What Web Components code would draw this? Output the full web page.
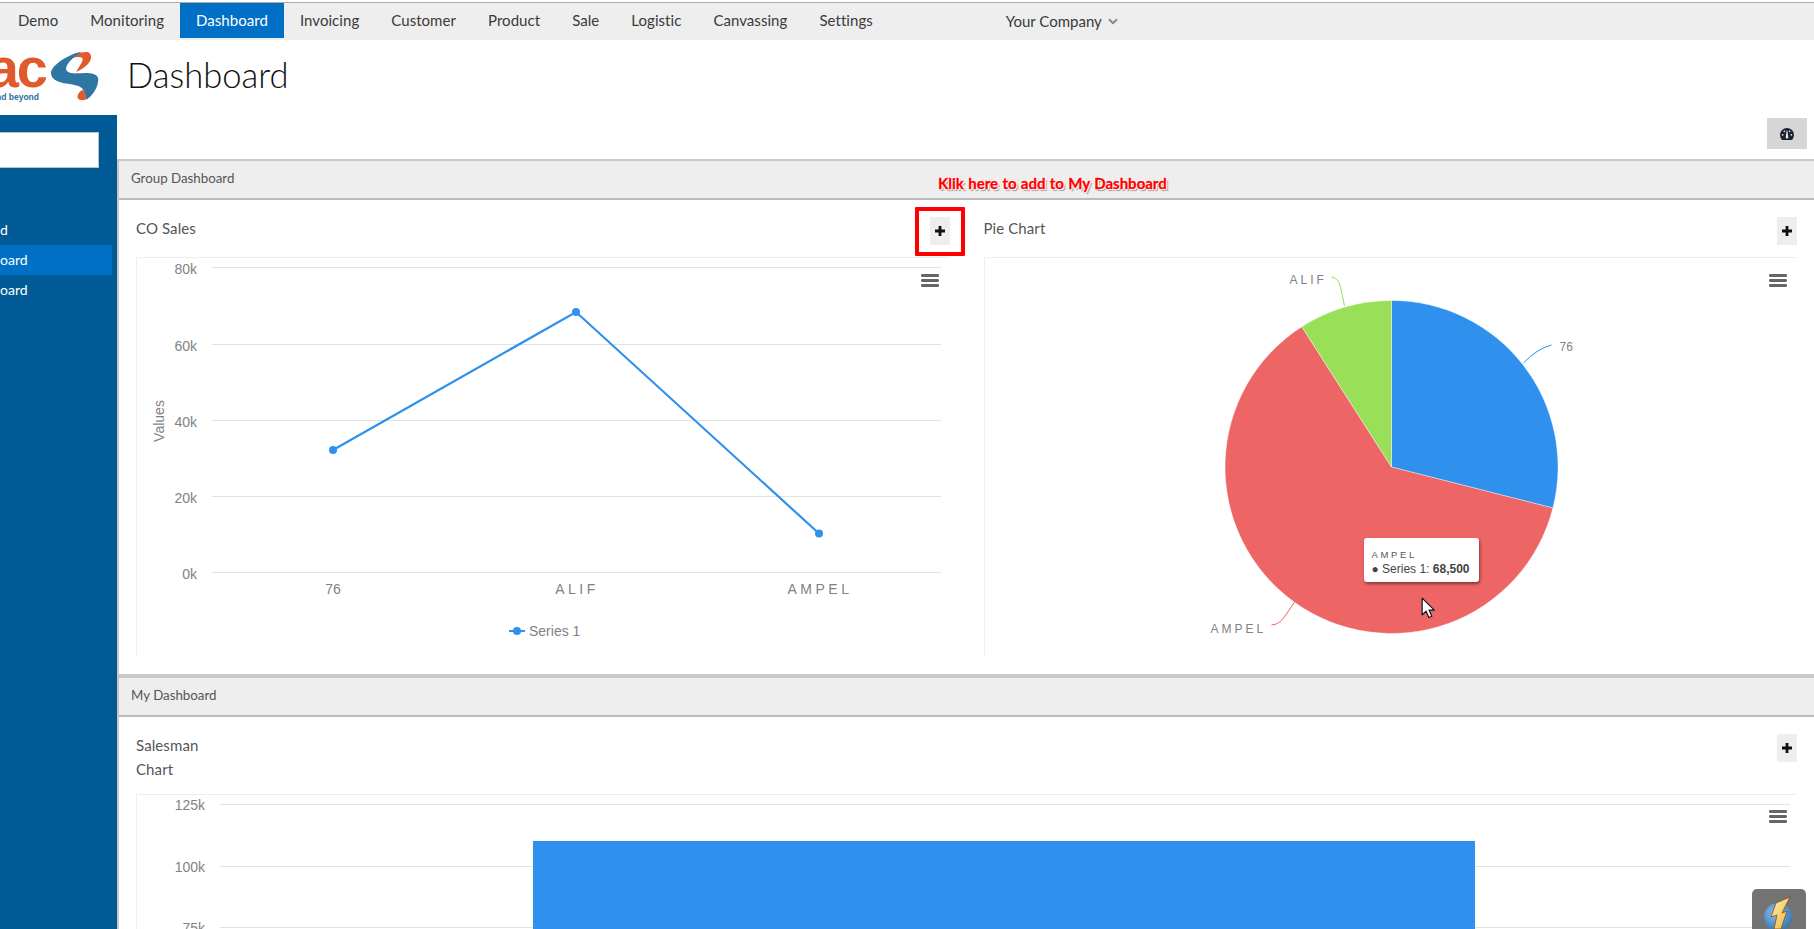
<!doctype html>
<html>
<head>
<meta charset="utf-8">
<title>Dashboard</title>
<style>
  html, body { margin: 0; height: 929px; overflow: hidden; background: #fff; font-family: Lato, "Noto Sans", sans-serif; color: #333; }
  .app { display: flex; flex-direction: column; height: 929px; padding-top: 2px; box-sizing: border-box; }
  .below { display: flex; flex: 1; min-height: 0; }
  .left { width: 117px; flex: none; display: flex; flex-direction: column; }
  .right { flex: 1; min-width: 0; display: flex; flex-direction: column; position: relative; }
  .sections { border-left: 2px solid #c8c8c8; flex: 1; min-height: 0; }
  .row { display: grid; grid-template-columns: 1fr 1fr; }
</style>
</head>
<body>
<div class="app">
  <top-nav>
    <nav-item>Demo</nav-item>
    <nav-item>Monitoring</nav-item>
    <nav-item active>Dashboard</nav-item>
    <nav-item>Invoicing</nav-item>
    <nav-item>Customer</nav-item>
    <nav-item>Product</nav-item>
    <nav-item>Sale</nav-item>
    <nav-item>Logistic</nav-item>
    <nav-item>Canvassing</nav-item>
    <nav-item>Settings</nav-item>
    <company-menu slot="end">Your Company</company-menu>
  </top-nav>
  <div class="below">
    <div class="left">
      <brand-logo></brand-logo>
      <side-bar>
        <side-item>d</side-item>
        <side-item active>oard</side-item>
        <side-item>oard</side-item>
      </side-bar>
    </div>
    <div class="right">
      <page-title>Dashboard</page-title>
      <page-tools></page-tools>
      <div class="sections">
        <section-head>Group Dashboard</section-head>
        <click-hint>Klik here to add to My Dashboard</click-hint>
        <div class="row">
          <chart-panel data-title="CO Sales" marked><line-chart></line-chart></chart-panel>
          <chart-panel data-title="Pie Chart"><pie-chart></pie-chart></chart-panel>
        </div>
        <section-head thick>My Dashboard</section-head>
        <chart-panel data-title="Salesman Chart"><bar-chart></bar-chart></chart-panel>
      </div>
    </div>
  </div>
</div>
<flash-widget></flash-widget>

<script>
const MENU = `<svg class="menu" viewBox="0 0 18 13" width="18" height="13"><g fill="#666"><rect y="0" width="18" height="3" rx="1.2"/><rect y="5" width="18" height="3" rx="1.2"/><rect y="10" width="18" height="3" rx="1.2"/></g></svg>`;

const CHART_CSS = `
  :host { display: block; position: relative; }
  svg { display: block; }
  svg text { font-family: "Liberation Sans", Arial, sans-serif; font-size: 14px; fill: #828282; }
  svg .spaced { letter-spacing: .25em; }
  svg .small { font-size: 12px; }
  .menu { position: absolute; top: 16px; right: 10px; }
`;

function shadow(el, html) {
  el.attachShadow({ mode: 'open' }).innerHTML = html;
}

class TopNav extends HTMLElement {
  constructor() {
    super();
    shadow(this, `<style>
      :host { display: flex; height: 37px; flex: none; background: #eee; border-top: 1px solid #aaa; padding-left: 2px; align-items: flex-start; }
      .end { margin-left: 117px; }
    </style><slot></slot><div class="end"><slot name="end"></slot></div>`);
  }
}
customElements.define('top-nav', TopNav);

class NavItem extends HTMLElement {
  constructor() {
    super();
    shadow(this, `<style>
      :host { display: block; height: 35px; line-height: 34px; padding: 0 16px; font-size: 15px; letter-spacing: .05px; color: #3a3a3a; }
      :host([active]) { background: #0070c6; color: #fff; }
    </style><slot></slot>`);
  }
}
customElements.define('nav-item', NavItem);

class CompanyMenu extends HTMLElement {
  constructor() {
    super();
    shadow(this, `<style>
      :host { display: flex; align-items: center; gap: 6px; height: 36px; font-size: 15px; color: #3a3a3a; }
    </style><slot></slot>
    <svg width="10" height="7" viewBox="0 0 10 7"><path d="M1 1.2 5 5.2 9 1.2" fill="none" stroke="#888" stroke-width="2"/></svg>`);
  }
}
customElements.define('company-menu', CompanyMenu);

class BrandLogo extends HTMLElement {
  constructor() {
    super();
    shadow(this, `<style>
      :host { display: block; height: 75px; flex: none; }
      svg { display: block; }
      text { font-family: "Liberation Sans", Arial, sans-serif; font-weight: 700; }
    </style>
    <svg width="117" height="75" viewBox="0 0 117 75">
      <text x="46" y="47" text-anchor="end" font-size="56" letter-spacing="-2" fill="#e05a2b">ac</text>
      <text x="39" y="60" text-anchor="end" font-size="8.5" fill="#2c6f9f">nd beyond</text>
      <g transform="translate(39.3 8) scale(.355 .3333)">
        <path fill="#e05a2b" d="M92 30C100 18 125 8 138 13C150 20 148 38 135 50C125 60 115 66 104 72C110 58 122 44 122 34C122 26 108 26 92 30Z"/>
        <path fill="#2f76a3" d="M118 12C90 15 33 50 33 75C33 98 60 105 85 108C110 112 122 118 125 128C130 138 132 150 131 156C150 145 168 115 166 90C160 72 130 74 108 76C88 78 72 72 76 58C80 42 100 25 118 12Z"/>
        <path fill="#e05a2b" d="M122 125C112 130 106 142 108 150C112 158 126 158 131 154C133 145 128 130 122 125Z"/>
      </g>
    </svg>`);
  }
}
customElements.define('brand-logo', BrandLogo);

class SideBar extends HTMLElement {
  constructor() {
    super();
    shadow(this, `<style>
      :host { display: block; flex: 1; background: #005a96; padding-top: 17px; overflow: hidden; }
      .search { width: 98px; height: 34px; background: #fff; border: 1px solid #b9c4cc; border-left: 0; margin-bottom: 47px; }
      .list { display: block; width: 112px; }
    </style><div class="search"></div><div class="list"><slot></slot></div>`);
  }
}
customElements.define('side-bar', SideBar);

class SideItem extends HTMLElement {
  constructor() {
    super();
    shadow(this, `<style>
      :host { display: block; height: 30px; line-height: 30px; font-size: 14px; color: #fff; }
      :host([active]) { background: #0070c6; }
    </style><slot></slot>`);
  }
}
customElements.define('side-item', SideItem);

class PageTitle extends HTMLElement {
  constructor() {
    super();
    shadow(this, `<style>
      :host { display: block; height: 78px; padding-left: 10px; flex: none; font-size: 34.6px; font-weight: 300; line-height: 70px; color: #111; }
    </style><slot></slot>`);
  }
}
customElements.define('page-title', PageTitle);

class PageTools extends HTMLElement {
  constructor() {
    super();
    shadow(this, `<style>
      :host { display: flex; justify-content: flex-end; height: 41px; padding-right: 7px; flex: none; }
      button { width: 40px; height: 31px; border: 0; padding: 0; background: #d6d6d6; display: flex; align-items: center; justify-content: center; }
    </style>
    <button><svg width="14" height="12" viewBox="0 0 15 13">
      <path fill="#1b2430" d="M7.5 0C3.4 0 0 3.3 0 7.4c0 2 .7 3.8 2 5.6h11c1.3-1.8 2-3.6 2-5.6C15 3.3 11.6 0 7.5 0Z"/>
      <g fill="#e8e8e8"><circle cx="2.8" cy="7.5" r=".9"/><circle cx="4.6" cy="3.6" r=".9"/><circle cx="10.4" cy="3.6" r=".9"/><circle cx="12.2" cy="7.5" r=".9"/><path d="M7.1 2.6h.8l.9 7a1.4 1.4 0 1 1-2.6 0Z"/></g>
    </svg></button>`);
  }
}
customElements.define('page-tools', PageTools);

class SectionHead extends HTMLElement {
  constructor() {
    super();
    shadow(this, `<style>
      :host { display: block; box-sizing: border-box; height: 41px; line-height: 35px; padding-left: 12px; font-size: 13.3px; color: #555; background: #eee; border-top: 2px solid #c8c8c8; border-bottom: 2px solid #bbb; }
      :host([thick]) { height: 43px; border-top-width: 4px; }
    </style><slot></slot>`);
  }
}
customElements.define('section-head', SectionHead);

class ClickHint extends HTMLElement {
  constructor() {
    super();
    shadow(this, `<style>
      :host { position: absolute; left: 821px; top: 134px; font-size: 15px; font-weight: 700; word-spacing: .7px; color: #f00; white-space: nowrap; -webkit-text-stroke: .3px #f00; text-shadow: 1px 0 0 #fff, 0 1px 0 #fff, -1px 0 0 #fff, 0 -1px 0 #fff, 1px 1px 0 #fff, 2px 2px 1px #999; }
    </style><slot></slot>`);
  }
}
customElements.define('click-hint', ClickHint);

class ChartPanel extends HTMLElement {
  constructor() {
    super();
    shadow(this, `<style>
      :host { display: block; padding: 17px; min-width: 0; }
      .head { display: flex; justify-content: space-between; align-items: flex-start; margin-bottom: 12px; }
      .title { width: 90px; margin: -1px 0 1px; font-size: 15px; letter-spacing: .1px; line-height: 24px; color: #555; }
      .add { position: relative; width: 20px; height: 28px; background: #eee; display: flex; align-items: center; justify-content: center; }
      .box { display: block; border-top: 1px solid #eee; border-left: 1px solid #eee; height: 400px; box-sizing: border-box; overflow: hidden; }
      .mark { display: none; position: absolute; left: -15px; top: -10px; width: 50px; height: 49px; box-sizing: border-box; border: 4px solid #f00; border-radius: 1px; }
      :host([marked]) .mark { display: block; }
    </style>
    <div class="head">
      <div class="title"></div>
      <div class="add">
        <svg width="10" height="10" viewBox="0 0 10 10"><path fill="#111" d="M3.6 0h2.8v3.6H10v2.8H6.4V10H3.6V6.4H0V3.6h3.6Z"/></svg>
        <span class="mark"></span>
      </div>
    </div>
    <div class="box"><slot></slot></div>`);
    this.shadowRoot.querySelector('.title').textContent = this.dataset.title;
  }
}
customElements.define('chart-panel', ChartPanel);

class LineChart extends HTMLElement {
  constructor() {
    super();
    const ticks = [[9, '80k'], [86, '60k'], [162, '40k'], [238, '20k'], [314, '0k']];
    shadow(this, `<style>${CHART_CSS}.menu { right: 11px; }</style>
    <svg width="813" height="399" viewBox="0 0 813 399">
      ${ticks.map(([y, t]) => `<line x1="75" x2="804" y1="${y}.5" y2="${y}.5" stroke="#e2e2e2"/><text x="60" y="${y + 6.5}" text-anchor="end">${t}</text>`).join('')}
      <text transform="translate(27 163) rotate(-90)" text-anchor="middle">Values</text>
      <polyline points="196,192 439,54 682,275.5" fill="none" stroke="#2f90ee" stroke-width="2.2"/>
      <g fill="#2f90ee"><circle cx="196" cy="192" r="4"/><circle cx="439" cy="54" r="4"/><circle cx="682" cy="275.5" r="4"/></g>
      <text x="196" y="336" text-anchor="middle">76</text>
      <text x="440" y="336" text-anchor="middle" class="spaced">ALIF</text>
      <text x="683" y="336" text-anchor="middle" class="spaced">AMPEL</text>
      <line x1="372" x2="388" y1="373" y2="373" stroke="#2f90ee" stroke-width="2"/><circle cx="380" cy="373" r="4" fill="#2f90ee"/>
      <text x="392" y="378">Series 1</text>
    </svg>${MENU}`);
  }
}
customElements.define('line-chart', LineChart);

class PieChart extends HTMLElement {
  constructor() {
    super();
    shadow(this, `<style>${CHART_CSS}
      .tip { position: absolute; left: 379px; top: 280px; box-sizing: border-box; width: 115px; height: 44px; padding: 10px 8px 0; background: #fff; border-radius: 3px; box-shadow: 1px 2px 3px rgba(0,0,0,.45); font: 12px/16px "Liberation Sans", Arial, sans-serif; color: #444; white-space: nowrap; }
      .tip .name { font-size: 9.5px; line-height: 13px; letter-spacing: .28em; color: #555; }
      .tip b { font-weight: 700; }
      .cursor { position: absolute; left: 436px; top: 339px; }
    </style>
    <svg width="813" height="399" viewBox="0 0 813 399">
      <g transform="translate(-1.5 -1)">
        <path d="M408 210V43.5A166.5 166.5 0 0 1 569.4 251Z" fill="#2f90ee" stroke="#fff" stroke-width=".4"/>
        <path d="M408 210L569.4 251A166.5 166.5 0 1 1 318.3 69.7Z" fill="#ed6565" stroke="#fff" stroke-width=".4"/>
        <path d="M408 210L318.3 69.7A166.5 166.5 0 0 1 408 43.5Z" fill="#99e058" stroke="#fff" stroke-width=".4"/>
        <path d="M540 106Q553 92 568 88" fill="none" stroke="#2f90ee"/>
        <path d="M348 20Q355 21 357 30L361 49" fill="none" stroke="#99e058"/>
        <path d="M288 368Q296 368 303 357L311 345" fill="none" stroke="#ed6565"/>
        <text x="576" y="94" class="small">76</text>
        <text x="306" y="27" class="small spaced">ALIF</text>
        <text x="227" y="376" class="small spaced">AMPEL</text>
      </g>
    </svg>${MENU}
    <div class="tip"><div class="name">AMPEL</div><div>&#9679; Series 1: <b>68,500</b></div></div>
    <svg class="cursor" width="15" height="22" viewBox="0 0 13 19"><path d="M1 1v14.5l3.4-3.2 2.4 5.4 2.6-1.1-2.4-5.3H11.5Z" fill="#fff" stroke="#111" stroke-width="1" stroke-linejoin="round"/></svg>`);
  }
}
customElements.define('pie-chart', PieChart);

class BarChart extends HTMLElement {
  constructor() {
    super();
    const ticks = [[9, '125k'], [71, '100k'], [132, '75k']];
    shadow(this, `<style>${CHART_CSS}.menu { top: 15px; }</style>
    <svg width="1661" height="399" viewBox="0 0 1661 399">
      ${ticks.map(([y, t]) => `<line x1="83" x2="1653" y1="${y}.5" y2="${y}.5" stroke="#e2e2e2"/><text x="68" y="${y + 6}" text-anchor="end">${t}</text>`).join('')}
      <rect x="396" y="46" width="942" height="300" fill="#2f90ee"/>
    </svg>${MENU}`);
  }
}
customElements.define('bar-chart', BarChart);

class FlashWidget extends HTMLElement {
  constructor() {
    super();
    shadow(this, `<style>
      :host { position: fixed; right: 8px; bottom: 0; width: 54px; height: 40px; background: rgba(100,100,100,.9); border-radius: 5px 5px 0 0; overflow: hidden; }
      svg { display: block; }
    </style>
    <svg width="54" height="40" viewBox="0 0 54 40">
      <defs><radialGradient id="g" cx=".4" cy=".35" r=".75"><stop offset="0" stop-color="#8cc0e8"/><stop offset="1" stop-color="#2a6fad"/></radialGradient>
      <linearGradient id="b" x1="0" y1="0" x2="1" y2="1"><stop offset="0" stop-color="#fff3b0"/><stop offset="1" stop-color="#e8b23c"/></linearGradient></defs>
      <circle cx="26" cy="28" r="14" fill="url(#g)"/>
      <path d="M38 8 24 14 19 28 25 26 22 40 29 40 35 22 30 24Z" fill="url(#b)" stroke="#8a4a20" stroke-width=".8"/>
    </svg>`);
  }
}
customElements.define('flash-widget', FlashWidget);
</script>
</body>
</html>
